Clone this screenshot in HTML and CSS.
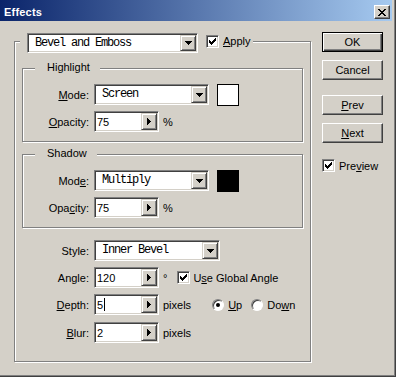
FILE: index.html
```html
<!DOCTYPE html>
<html lang="en">
<head>
<meta charset="utf-8">
<title>Effects</title>
<link rel="stylesheet" href="styles.css">
</head>
<body>
<div class="window">
  <div class="titlebar">
    <span class="title">Effects</span>
    <span class="close">
      <svg width="8" height="7" viewBox="0 0 8 7" shape-rendering="crispEdges"><path d="M0 0h2v1h1v1h2v-1h1v-1h2v1h-1v1h-1v1h-1v1h1v1h1v1h1v1h-2v-1h-1v-1h-2v1h-1v1h-2v-1h1v-1h1v-1h1v-1h-1v-1h-1v-1h-1z"/></svg>
    </span>
  </div>
  <div class="client">
    <div class="group main">
      <div class="legend">
        <div class="combo w-effect">
          <span class="value">Bevel and Emboss</span>
          <span class="dropbtn"><svg width="7" height="4" viewBox="0 0 7 4" shape-rendering="crispEdges"><path d="M0 0h7v1h-1v1h-1v1h-1v1h-1v-1h-1v-1h-1v-1h-1z"/></svg></span>
        </div>
        <span class="check on"><svg width="7" height="7" viewBox="0 0 7 7" shape-rendering="crispEdges"><path d="M0 2h1v1h1v1h1v-1h1v-1h1v-1h1v-1h1v3h-1v1h-1v1h-1v1h-1v1h-1v-1h-1v-1h-1z"/></svg></span>
        <span class="apply"><u>A</u>pply</span>
      </div>

      <div class="group sub">
        <div class="gtitle">Highlight</div>
        <div class="row r1">
          <span class="label"><u>M</u>ode:</span>
          <div class="combo w-mode">
            <span class="value">Screen</span>
            <span class="dropbtn"><svg width="7" height="4" viewBox="0 0 7 4" shape-rendering="crispEdges"><path d="M0 0h7v1h-1v1h-1v1h-1v1h-1v-1h-1v-1h-1v-1h-1z"/></svg></span>
          </div>
          <span class="swatch white"></span>
        </div>
        <div class="row">
          <span class="label"><u>O</u>pacity:</span>
          <div class="spin">
            <span class="num">75</span>
            <span class="dropbtn"><svg width="4" height="7" viewBox="0 0 4 7" shape-rendering="crispEdges"><path d="M0 0h1v1h1v1h1v1h1v1h-1v1h-1v1h-1v1h-1z"/></svg></span>
          </div>
          <span class="unit">%</span>
        </div>
      </div>

      <div class="group sub">
        <div class="gtitle">Shadow</div>
        <div class="row r1">
          <span class="label">Mod<u>e</u>:</span>
          <div class="combo w-mode">
            <span class="value">Multiply</span>
            <span class="dropbtn"><svg width="7" height="4" viewBox="0 0 7 4" shape-rendering="crispEdges"><path d="M0 0h7v1h-1v1h-1v1h-1v1h-1v-1h-1v-1h-1v-1h-1z"/></svg></span>
          </div>
          <span class="swatch black"></span>
        </div>
        <div class="row">
          <span class="label">Opa<u>c</u>ity:</span>
          <div class="spin">
            <span class="num">75</span>
            <span class="dropbtn"><svg width="4" height="7" viewBox="0 0 4 7" shape-rendering="crispEdges"><path d="M0 0h1v1h1v1h1v1h1v1h-1v1h-1v1h-1v1h-1z"/></svg></span>
          </div>
          <span class="unit">%</span>
        </div>
      </div>

      <div class="row style-row">
        <span class="label">Style:</span>
        <div class="combo w-style">
          <span class="value">Inner Bevel</span>
          <span class="dropbtn"><svg width="7" height="4" viewBox="0 0 7 4" shape-rendering="crispEdges"><path d="M0 0h7v1h-1v1h-1v1h-1v1h-1v-1h-1v-1h-1v-1h-1z"/></svg></span>
        </div>
      </div>
      <div class="row">
        <span class="label">Angle:</span>
        <div class="spin">
          <span class="num">120</span>
          <span class="dropbtn"><svg width="4" height="7" viewBox="0 0 4 7" shape-rendering="crispEdges"><path d="M0 0h1v1h1v1h1v1h1v1h-1v1h-1v1h-1v1h-1z"/></svg></span>
        </div>
        <span class="unit">°</span>
        <span class="check on global"><svg width="7" height="7" viewBox="0 0 7 7" shape-rendering="crispEdges"><path d="M0 2h1v1h1v1h1v-1h1v-1h1v-1h1v-1h1v3h-1v1h-1v1h-1v1h-1v1h-1v-1h-1v-1h-1z"/></svg></span>
        <span class="opt">U<u>s</u>e Global Angle</span>
      </div>
      <div class="row">
        <span class="label"><u>D</u>epth:</span>
        <div class="spin">
          <span class="num">5<span class="caret"></span></span>
          <span class="dropbtn"><svg width="4" height="7" viewBox="0 0 4 7" shape-rendering="crispEdges"><path d="M0 0h1v1h1v1h1v1h1v1h-1v1h-1v1h-1v1h-1z"/></svg></span>
        </div>
        <span class="unit">pixels</span>
        <span class="radio on up"></span>
        <span class="opt"><u>U</u>p</span>
        <span class="radio down"></span>
        <span class="opt">Do<u>w</u>n</span>
      </div>
      <div class="row blur-row">
        <span class="label"><u>B</u>lur:</span>
        <div class="spin">
          <span class="num">2</span>
          <span class="dropbtn"><svg width="4" height="7" viewBox="0 0 4 7" shape-rendering="crispEdges"><path d="M0 0h1v1h1v1h1v1h1v1h-1v1h-1v1h-1v1h-1z"/></svg></span>
        </div>
        <span class="unit">pixels</span>
      </div>
    </div>

    <div class="buttons">
      <button class="btn default">OK</button>
      <button class="btn">Cancel</button>
      <button class="btn far"><u>P</u>rev</button>
      <button class="btn"><u>N</u>ext</button>
      <div class="preview">
        <span class="check on"><svg width="7" height="7" viewBox="0 0 7 7" shape-rendering="crispEdges"><path d="M0 2h1v1h1v1h1v-1h1v-1h1v-1h1v-1h1v3h-1v1h-1v1h-1v1h-1v1h-1v-1h-1v-1h-1z"/></svg></span>
        <span class="opt">Pre<u>v</u>iew</span>
      </div>
    </div>
  </div>
</div>
</body>
</html>
```

FILE: styles.css
```css
* { box-sizing: border-box; }
html, body { margin: 0; padding: 0; }
body {
  width: 396px;
  height: 377px;
  overflow: hidden;
  background: #d4d0c8;
  font-family: "Liberation Sans", Arial, sans-serif;
  font-size: 11px;
  color: #000;
}
u { text-decoration: underline; text-underline-offset: 1px; }

.window {
  width: 396px;
  height: 377px;
  background: #d4d0c8;
  box-shadow: inset -1px -1px 0 #404040, inset -2px -2px 0 #808080;
  padding-right: 4px;
}

.titlebar {
  height: 21px;
  display: flex;
  align-items: flex-start;
  justify-content: space-between;
  background: linear-gradient(to right, #0a246a, #a6caf0);
  color: #fff;
}
.title {
  font-weight: bold;
  line-height: 13px;
  padding: 6px 0 0 4px;
  letter-spacing: 0.2px;
}
.close {
  width: 16px;
  height: 14px;
  margin: 5px 2px 0 0;
  background: #d4d0c8;
  border: 1px solid;
  border-color: #fff #404040 #404040 #fff;
  box-shadow: inset -1px -1px 0 #808080;
  display: flex;
  align-items: center;
  justify-content: center;
}

.client {
  display: flex;
  align-items: flex-start;
  padding-left: 14px;
}

.group {
  border: 1px solid #808080;
  box-shadow: 1px 1px 0 #fff, inset 1px 1px 0 #fff;
}
.main {
  width: 297px;
  margin-top: 20px;
  padding: 0 7px 18px 7px;
  flex: none;
}

.legend {
  display: flex;
  align-items: flex-start;
  width: max-content;
  margin: -9px 0 0 -2px;
  padding: 0 2px 0 7px;
  background: #d4d0c8;
}
.legend .check { margin: 2px 0 0 8px; }
.apply { line-height: 13px; margin: 2px 0 0 4px; }

.sub {
  height: 74px;
  margin-top: 15px;
}
.sub + .sub { margin-top: 12px; }
.gtitle {
  width: max-content;
  margin: -9px 0 0 12px;
  padding: 0 10px 0 12px;
  line-height: 14px;
  background: #d4d0c8;
}

.row {
  display: flex;
  align-items: center;
  height: 21px;
  margin-top: 6px;
}
.sub .r1 { margin-top: 10px; }
.style-row { margin-top: 12px; }
.blur-row { margin-top: 7px; }

.label {
  flex: none;
  width: 67px;
  margin-right: 5px;
  text-align: right;
}
.sub .label { width: 66px; }

.combo, .spin {
  flex: none;
  display: flex;
  height: 21px;
  padding: 1px;
  border: 1px solid;
  border-color: #808080 #fff #fff #808080;
  background: #fff;
  box-shadow: inset 1px 1px 0 #404040, inset -1px -1px 0 #d4d0c8;
}
.w-effect { width: 171px; height: 20px; }
.w-mode { width: 115px; }
.w-style { width: 126px; }
.spin { width: 65px; }

.value {
  flex: 1;
  padding-left: 6px;
  font-family: "Liberation Mono", "Courier New", monospace;
  font-size: 12px;
  letter-spacing: -1.2px;
  line-height: 16px;
  white-space: pre;
}
.num {
  flex: 1;
  display: flex;
  align-items: center;
  padding-left: 1px;
  line-height: 16px;
}
.caret {
  display: inline-block;
  width: 1px;
  height: 13px;
  background: #000;
  margin-left: 1px;
}
.dropbtn {
  flex: none;
  width: 16px;
  background: #d4d0c8;
  border: 1px solid;
  border-color: #d4d0c8 #404040 #404040 #d4d0c8;
  box-shadow: inset 1px 1px 0 #fff, inset -1px -1px 0 #808080;
  display: flex;
  align-items: center;
  justify-content: center;
}

.swatch {
  flex: none;
  align-self: flex-start;
  width: 22px;
  height: 22px;
  margin-left: 8px;
  border: 1px solid #000;
}
.swatch.white { background: #fff; }
.swatch.black { background: #000; }

.unit { margin-left: 4px; }

.check {
  flex: none;
  width: 13px;
  height: 13px;
  border: 1px solid;
  border-color: #808080 #fff #fff #808080;
  background: #fff;
  box-shadow: inset 1px 1px 0 #404040, inset -1px -1px 0 #d4d0c8;
  display: flex;
  align-items: center;
  justify-content: center;
}
.check.global { margin-left: 10px; }
.opt { margin-left: 3px; }

.radio {
  flex: none;
  width: 12px;
  height: 12px;
  border-radius: 50%;
  border: 1px solid;
  border-color: #808080 #fff #fff #808080;
  background: #fff;
  box-shadow: inset 1px 1px 0 #404040;
  display: flex;
  align-items: center;
  justify-content: center;
}
.radio.on::after {
  content: "";
  width: 4px;
  height: 4px;
  border-radius: 50%;
  background: #000;
}
.radio.up { margin-left: 21px; }
.radio + .opt { margin-left: 4px; }
.radio.down { margin-left: 9px; }

.buttons {
  display: flex;
  flex-direction: column;
  align-items: flex-start;
  margin: 11px 0 0 11px;
}
.btn {
  width: 61px;
  height: 20px;
  margin: 8px 0 0 0;
  padding: 0;
  font: inherit;
  color: #000;
  background: #d4d0c8;
  border: 1px solid;
  border-color: #fff #404040 #404040 #fff;
  box-shadow: inset -1px -1px 0 #808080;
  line-height: 16px;
  text-align: center;
}
.btn.default {
  margin-top: 0;
  border-color: #000;
  box-shadow: inset 1px 1px 0 #fff, inset -1px -1px 0 #404040, inset -2px -2px 0 #808080;
}
.btn.far { margin-top: 15px; }
.preview {
  display: flex;
  align-items: center;
  margin-top: 16px;
}
.preview .opt { margin-left: 4px; }
```
